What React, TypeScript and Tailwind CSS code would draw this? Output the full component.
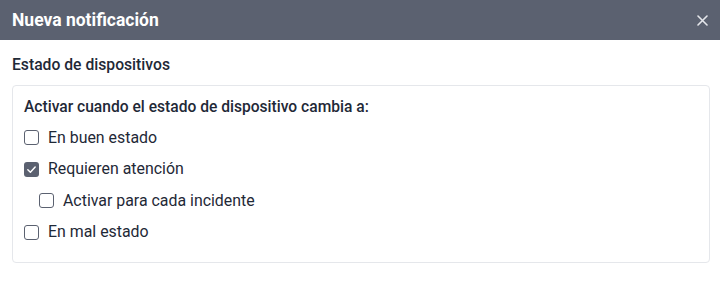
import React from "react";

function Box({ checked }: { checked?: boolean }) {
  return checked ? (
    <span className="w-[15px] h-[15px] rounded-[3px] bg-[#5b6170] flex items-center justify-center shrink-0">
      <svg width="11" height="11" viewBox="0 0 12 12" fill="none">
        <path d="M2 6.3 L4.8 9 L10 3.2" stroke="white" strokeWidth="1.6" strokeLinecap="round" strokeLinejoin="round" />
      </svg>
    </span>
  ) : (
    <span className="w-[15px] h-[15px] rounded-[3px] border border-[#5b6170] bg-white shrink-0" />
  );
}

function Row({ label, checked, indent }: { label: string; checked?: boolean; indent?: boolean }) {
  return (
    <div className={`flex items-center h-[31.5px] gap-[9px] ${indent ? "pl-[15px]" : ""}`}>
      <Box checked={checked} />
      <span className="text-[15.9px] text-[#1f2937]">{label}</span>
    </div>
  );
}

export default function App() {
  return (
    <div className="w-[720px] h-[281px] bg-white" style={{ fontFamily: "Roboto, 'Noto Sans', sans-serif" }}>
      <div className="h-[40px] bg-[#5b6170] flex items-center justify-between pl-[12px] pr-[12px]">
        <span className="text-white font-bold text-[17.5px]">Nueva notificación</span>
        <svg width="11" height="11" viewBox="0 0 11 11">
          <path d="M1 1 L10 10 M10 1 L1 10" stroke="#e5e7eb" strokeWidth="1.6" strokeLinecap="round" />
        </svg>
      </div>
      <div className="px-[12px] pt-[15px]">
        <div className="text-[15.7px] font-medium text-[#1f2937] leading-[20px]">Estado de dispositivos</div>
        <div className="mt-[10px] w-[698px] h-[178px] border border-[#e5e7eb] rounded-[4px] px-[11px] pt-[11px]">
          <div className="text-[15.6px] font-medium text-[#1f2937] leading-[20px] mb-[5px]">
            Activar cuando el estado de dispositivo cambia a:
          </div>
          <Row label="En buen estado" />
          <Row label="Requieren atención" checked />
          <Row label="Activar para cada incidente" indent />
          <Row label="En mal estado" />
        </div>
      </div>
    </div>
  );
}
